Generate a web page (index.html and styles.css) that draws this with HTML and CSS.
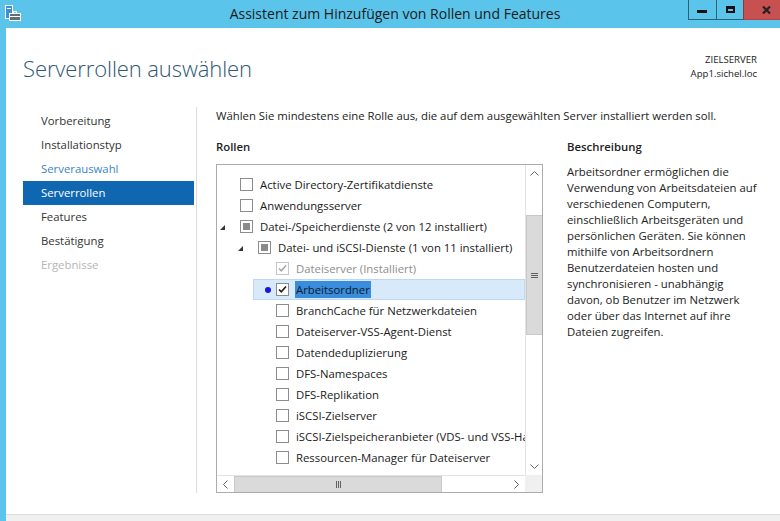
FILE: index.html
```html
<!DOCTYPE html>
<html lang="de">
<head>
    <meta charset="UTF-8">
    <title>Assistent zum Hinzufügen von Rollen und Features</title>
    <link rel="stylesheet" href="styles.css">
</head>
<body>

<div class="titlebar">
    <div class="app">
        <svg class="app-icon" width="18" height="18" viewBox="0 0 18 18">
            <rect x="1.5" y="1.5" width="7" height="13" fill="#3f8fd6" stroke="#fff"/>
            <path d="M3 4.5h4" stroke="#fff"/>
            <rect x="5.5" y="9.5" width="11" height="7" fill="#5f6f7c" stroke="#fff"/>
            <path d="M9.5 9.5V7.5h3v2" fill="none" stroke="#fff"/>
            <path d="M5.5 12.5h11" stroke="#fff"/>
        </svg>
    </div>
    <div class="title">Assistent zum Hinzufügen von Rollen und Features</div>
    <div class="caption">
        <div class="cap-btn cap-min"><svg class="g-min" width="10" height="3"><rect width="10" height="3" fill="#111"/></svg></div>
        <div class="cap-btn cap-max"><svg class="g-max" width="9" height="7" viewBox="0 0 9 7"><path d="M1 2h7v4H1z" fill="none" stroke="#111" stroke-width="2"/><path d="M0 0.5h9" stroke="#111" stroke-width="2"/></svg></div>
        <div class="cap-btn cap-quit"><svg class="g-quit" width="9" height="8" viewBox="0 0 9 8"><path d="M1 0.5l7 7M8 0.5l-7 7" stroke="#222" stroke-width="2.2"/></svg></div>
    </div>
</div>

<div class="frame">
    <div class="client">
        <div class="head">
            <h1>Serverrollen auswählen</h1>
            <div class="target">
                <div>ZIELSERVER</div>
                <div>App1.sichel.loc</div>
            </div>
        </div>

        <div class="content">
            <ul class="steps">
                <li>Vorbereitung</li>
                <li>Installationstyp</li>
                <li class="done">Serverauswahl</li>
                <li class="active">Serverrollen</li>
                <li>Features</li>
                <li>Bestätigung</li>
                <li class="off">Ergebnisse</li>
            </ul>

            <div class="main">
                <p class="intro">Wählen Sie mindestens eine Rolle aus, die auf dem ausgewählten Server installiert werden soll.</p>

                <div class="cols">
                    <div class="roles">
                        <h2>Rollen</h2>
                        <div class="tree">
                            <div class="list">
                                <div class="row"><div class="node"><span class="exp"></span><span class="cb"></span><span class="label">Active Directory-Zertifikatdienste</span></div></div>
                                <div class="row"><div class="node"><span class="exp"></span><span class="cb"></span><span class="label">Anwendungsserver</span></div></div>
                                <div class="row"><div class="node"><span class="exp"><svg width="5" height="5"><path d="M5 0V5H0z" fill="#333"/></svg></span><span class="cb part"><i></i></span><span class="label">Datei-/Speicherdienste (2 von 12 installiert)</span></div></div>
                                <div class="row l1"><div class="node"><span class="exp"><svg width="5" height="5"><path d="M5 0V5H0z" fill="#333"/></svg></span><span class="cb part"><i></i></span><span class="label">Datei- und iSCSI-Dienste (1 von 11 installiert)</span></div></div>
                                <div class="row l2"><div class="node"><span class="exp"></span><span class="cb off"><svg width="11" height="11" viewBox="0 0 11 11"><path d="M2 5.5l2.3 2.4L9 2.5" fill="none" stroke="#a8a8a8" stroke-width="1.6"/></svg></span><span class="label off">Dateiserver (Installiert)</span></div></div>
                                <div class="row l2"><div class="node selected"><span class="exp"><span class="dot"></span></span><span class="cb"><svg width="11" height="11" viewBox="0 0 11 11"><path d="M2 5.5l2.3 2.4L9 2.5" fill="none" stroke="#1c1c1c" stroke-width="1.6"/></svg></span><span class="label"><span class="hl">Arbeitsordner</span></span></div></div>
                                <div class="row l2"><div class="node"><span class="exp"></span><span class="cb"></span><span class="label">BranchCache für Netzwerkdateien</span></div></div>
                                <div class="row l2"><div class="node"><span class="exp"></span><span class="cb"></span><span class="label">Dateiserver-VSS-Agent-Dienst</span></div></div>
                                <div class="row l2"><div class="node"><span class="exp"></span><span class="cb"></span><span class="label">Datendeduplizierung</span></div></div>
                                <div class="row l2"><div class="node"><span class="exp"></span><span class="cb"></span><span class="label">DFS-Namespaces</span></div></div>
                                <div class="row l2"><div class="node"><span class="exp"></span><span class="cb"></span><span class="label">DFS-Replikation</span></div></div>
                                <div class="row l2"><div class="node"><span class="exp"></span><span class="cb"></span><span class="label">iSCSI-Zielserver</span></div></div>
                                <div class="row l2"><div class="node"><span class="exp"></span><span class="cb"></span><span class="label">iSCSI-Zielspeicheranbieter (VDS- und VSS-Hardwareanbieter)</span></div></div>
                                <div class="row l2"><div class="node"><span class="exp"></span><span class="cb"></span><span class="label">Ressourcen-Manager für Dateiserver</span></div></div>
                            </div>

                            <div class="vscroll">
                                <span class="sb-btn"><svg width="9" height="5" viewBox="0 0 9 5"><path d="M0.5 4.5l4-4 4 4" fill="none" stroke="#606060"/></svg></span>
                                <span class="vthumb"><svg width="7" height="7"><path d="M0 1.5h7M0 3.5h7M0 5.5h7" stroke="#606060"/></svg></span>
                                <span class="sb-btn down"><svg width="9" height="5" viewBox="0 0 9 5"><path d="M0.5 0.5l4 4 4-4" fill="none" stroke="#606060"/></svg></span>
                            </div>

                            <div class="hscroll">
                                <span class="sb-btn"><svg width="5" height="9" viewBox="0 0 5 9"><path d="M4.5 0.5l-4 4 4 4" fill="none" stroke="#606060"/></svg></span>
                                <span class="hthumb"><svg width="7" height="7"><path d="M1.5 0v7M3.5 0v7M5.5 0v7" stroke="#606060"/></svg></span>
                                <span class="sb-btn right"><svg width="5" height="9" viewBox="0 0 5 9"><path d="M0.5 0.5l4 4-4 4" fill="none" stroke="#606060"/></svg></span>
                            </div>

                            <div class="corner"></div>
                        </div>
                    </div>

                    <div class="desc">
                        <h2>Beschreibung</h2>
                        <p>Arbeitsordner ermöglichen die<br>
                        Verwendung von Arbeitsdateien auf<br>
                        verschiedenen Computern,<br>
                        einschließlich Arbeitsgeräten und<br>
                        persönlichen Geräten. Sie können<br>
                        mithilfe von Arbeitsordnern<br>
                        Benutzerdateien hosten und<br>
                        synchronisieren - unabhängig<br>
                        davon, ob Benutzer im Netzwerk<br>
                        oder über das Internet auf ihre<br>
                        Dateien zugreifen.</p>
                    </div>
                </div>
            </div>
        </div>

        <div class="buttonbar"></div>
    </div>
</div>

</body>
</html>
```

FILE: styles.css
```css
body {
    margin: 0;
    font-family: "Open Sans", "Noto Sans", sans-serif;
    font-size: 11.35px;
    color: #222;
    background: #fff;
}

/* title bar; the red strip behind the close button is also painted here */
.titlebar {
    display: flex;
    width: 780px;
    height: 28px;
    background:
        linear-gradient(to left, #c75050 37px, transparent 37px) top / 100% 20px no-repeat,
        #5bc4ea;
}
.app {
    width: 92px;
}
.app-icon {
    display: block;
    margin: 4px 0 0 4px;
}
.title {
    flex: 1;
    padding-left: 10px;
    text-align: center;
    font-size: 14px;
    line-height: 27px;
    color: #1b1b1b;
    white-space: nowrap;
}
.caption {
    display: flex;
    width: 92px;
}
.cap-btn {
    height: 20px;
    box-sizing: border-box;
    border-left: 1px solid #2d6275;
    border-bottom: 1px solid #2d6275;
}
.cap-btn svg {
    display: block;
}
.cap-min {
    width: 28px;
}
.cap-max {
    width: 27px;
}
.cap-quit {
    width: 37px;
    background: #c75050;
    border-left-color: #8f3a3a;
    border-bottom-color: #b04646;
}
.g-min {
    margin: 10px 0 0 8px;
}
.g-max {
    margin: 6px 0 0 9px;
}
.g-quit {
    margin: 6px 0 0 18px;
}

/* window frame */
.frame {
    display: flex;
    width: 780px;
    height: 493px;
    box-sizing: border-box;
    border-left: 6px solid #5bc4ea;
}
.client {
    flex: 1;
    display: flex;
    flex-direction: column;
    background: #fff;
}
.head {
    display: flex;
    justify-content: space-between;
    height: 77px;
    padding: 0 23px 0 17px;
}
h1 {
    margin: 25px 0 0 0;
    font-size: 22px;
    font-weight: 300;
    line-height: 30px;
    color: #2f5873;
    letter-spacing: -0.1px;
}
.target {
    margin-top: 25px;
    text-align: right;
    font-size: 9.6px;
    line-height: 14px;
    color: #222;
}

.content {
    display: flex;
    align-items: flex-start;
    height: 409px;
}

/* wizard steps */
.steps {
    list-style: none;
    width: 190px;
    margin: 0;
    padding: 4px 0 0 17px;
    box-sizing: border-box;
}
.steps li {
    width: 171px;
    height: 24px;
    line-height: 24px;
    padding-left: 18px;
    box-sizing: border-box;
    color: #333;
}
.steps li.done {
    color: #3d83c4;
}
.steps li.active {
    background: #0f67b1;
    color: #fff;
}
.steps li.off {
    color: #b5b5b5;
}

.main {
    flex: 1;
    height: 386px;
    margin-top: 2px;
    padding: 1px 0 0 19px;
    box-sizing: border-box;
    border-left: 1px solid #dcdcdc;
}
.intro {
    margin: 0;
    line-height: 16px;
    white-space: nowrap;
}
.cols {
    display: flex;
    gap: 24px;
    margin-top: 15px;
}
h2 {
    margin: 0;
    font-size: 11.35px;
    font-weight: 600;
    line-height: 16px;
    color: #222;
}

/* roles tree */
.roles {
    width: 327px;
}
.roles h2 {
    margin-bottom: 9px;
}
.tree {
    display: grid;
    grid-template-columns: 1fr 17px;
    grid-template-rows: 1fr 17px;
    height: 329px;
    box-sizing: border-box;
    border: 1px solid #acacac;
    background: #fff;
}
.list {
    overflow: hidden;
    padding-top: 9px;
}
.row {
    display: flex;
    height: 21px;
}
.row.l1 {
    padding-left: 18px;
}
.row.l2 {
    padding-left: 36px;
}
.node {
    flex: 1;
    display: flex;
    align-items: center;
    padding-left: 3px;
    white-space: nowrap;
}
.node.selected {
    background: #d8e9fa;
    box-shadow: inset 0 0 0 1px #bcd8f2;
}
.exp {
    display: flex;
    align-items: center;
    flex-shrink: 0;
    width: 20px;
    height: 21px;
    padding-top: 2px;
    box-sizing: border-box;
}
.dot {
    width: 6px;
    height: 6px;
    margin: -2px 0 0 9px;
    border-radius: 50%;
    background: #1515e6;
}
.cb {
    display: flex;
    align-items: center;
    justify-content: center;
    flex-shrink: 0;
    width: 13px;
    height: 13px;
    margin-right: 7px;
    box-sizing: border-box;
    border: 1px solid #8c8c8c;
    background: #fff;
}
.cb.off {
    border-color: #c6c6c6;
}
.cb.part i {
    width: 7px;
    height: 7px;
    background: #8a8a8a;
}
.label {
    line-height: 21px;
    color: #1a1a1a;
}
.label.off {
    color: #8e8e8e;
}
.hl {
    padding: 1px 1px;
    margin-left: -1px;
    background: #3a8cdc;
    color: #0c1a2a;
}

/* scrollbars */
.sb-btn {
    display: flex;
    align-items: center;
    justify-content: center;
    width: 17px;
    height: 17px;
    flex-shrink: 0;
    background: #fff;
}
.vscroll {
    display: flex;
    flex-direction: column;
    border-left: 1px solid #e3e3e3;
}
.vscroll .sb-btn {
    width: 16px;
}
.vthumb {
    display: flex;
    align-items: center;
    justify-content: center;
    height: 118px;
    margin-top: 33px;
    background: #dadada;
    border: 1px solid #c9c9c9;
    border-right: none;
}
.sb-btn.down {
    margin-top: auto;
}
.hscroll {
    display: flex;
    border-top: 1px solid #e3e3e3;
}
.hscroll .sb-btn {
    height: 16px;
}
.hthumb {
    display: flex;
    align-items: center;
    justify-content: center;
    width: 206px;
    background: #dadada;
    border: 1px solid #c9c9c9;
    border-bottom: none;
}
.sb-btn.right {
    margin-left: auto;
}
.corner {
    background: #f0f0f0;
}

/* description */
.desc p {
    margin: 9px 0 0 0;
    line-height: 16px;
    white-space: nowrap;
}

.buttonbar {
    flex: 1;
    border-top: 1px solid #dcdcdc;
    background: #f0f0f0;
}
```
